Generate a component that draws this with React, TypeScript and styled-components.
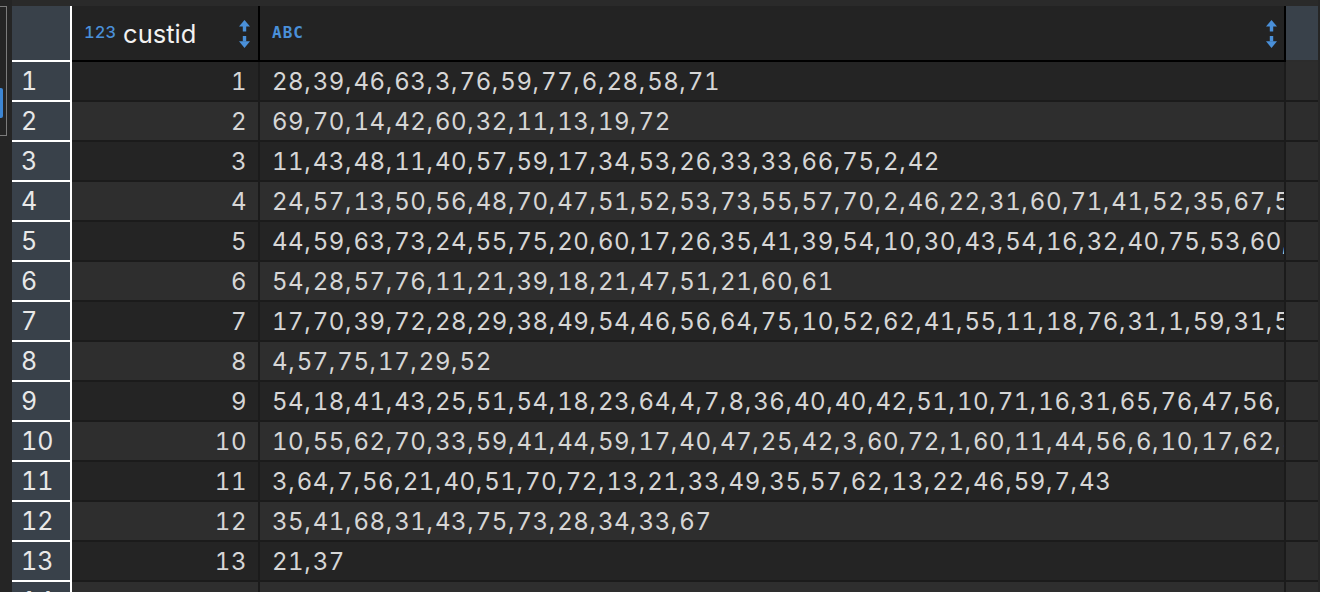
import React from 'react';
import styled, { createGlobalStyle } from 'styled-components';

const GlobalStyle = createGlobalStyle`
  html, body {
    margin: 0;
    padding: 0;
    background: #262626;
  }
  body {
    font-family: Inter, "Liberation Sans", Arial, sans-serif;
    font-variant-numeric: tabular-nums;
    overflow: hidden;
  }
`;

const Page = styled.div`
  display: flex;
  width: 1320px;
  height: 592px;
  overflow: hidden;
  background: #262626;
`;

const Gutter = styled.div`
  width: 12px;
  flex: none;
  background: #252525;
`;

const GutterFrame = styled.div`
  box-sizing: border-box;
  margin-top: 6px;
  width: 7px;
  height: 130px;
  border: 1px solid #7c7c7c;
  border-left: none;
  display: flex;
  flex-direction: column;
  padding-top: 81px;
`;

const GutterMarker = styled.div`
  width: 3px;
  height: 30px;
  background: #3d86d4;
  border-radius: 0 2px 2px 0;
`;

const Grid = styled.div`
  width: 1306px;
  flex: none;
  display: flex;
  flex-direction: column;
  padding-top: 6px;
  background: #2a2a2a;
`;

const EdgeStrip = styled.div`
  flex: 1;
  background: #262626;
`;

const HeaderRow = styled.div`
  display: flex;
  height: 56px;
  flex: none;
`;

const CornerCell = styled.div`
  box-sizing: border-box;
  width: 60px;
  background: #39414a;
  border-right: 2px solid #ffffff;
  border-bottom: 2px solid #ffffff;
`;

const HeaderCell = styled.div<{ $width: number; $padRight: number }>`
  box-sizing: border-box;
  width: ${(p) => p.$width}px;
  display: flex;
  align-items: center;
  justify-content: space-between;
  padding: 0 ${(p) => p.$padRight}px 0 12px;
  background: #232323;
  border-right: 2px solid #000000;
  border-bottom: 2px solid #000000;
`;

const HeaderTitle = styled.div`
  display: flex;
  align-items: center;
  gap: 7px;
`;

const TypeTag = styled.span`
  font-size: 16.5px;
  font-weight: 500;
  color: #4a90d9;
  margin-bottom: 2px;
`;

const ColumnName = styled.span`
  font-size: 25.5px;
  color: #f2f2f2;
`;

const AbcTag = styled.span`
  font-family: "DejaVu Sans Mono", monospace;
  font-weight: 700;
  font-size: 16px;
  letter-spacing: 1px;
  color: #4a90d9;
  margin-bottom: 1px;
`;

const SortSvg = styled.svg`
  flex: none;
  width: 11px;
  height: 28px;
  margin-top: 2px;
`;

const HeaderRight = styled.div`
  box-sizing: border-box;
  width: 32px;
  background: #39414a;
  border-bottom: 2px solid #2c2c2c;
`;

const BodyRow = styled.div<{ $odd: boolean }>`
  display: flex;
  height: 40px;
  flex: none;
  background: ${(p) => (p.$odd ? '#242424' : '#2e2e2e')};
`;

const RowNumber = styled.div`
  box-sizing: border-box;
  width: 60px;
  display: flex;
  align-items: center;
  padding-left: 9px;
  background: #39414a;
  border-right: 2px solid #ffffff;
  border-bottom: 2px solid #ffffff;
  font-size: 25px;
  color: #e8e8e8;
`;

const Cell = styled.div<{ $width: number; $align: 'left' | 'right' }>`
  box-sizing: border-box;
  width: ${(p) => p.$width}px;
  display: flex;
  align-items: center;
  justify-content: ${(p) => (p.$align === 'right' ? 'flex-end' : 'flex-start')};
  padding: ${(p) => (p.$align === 'right' ? '0 11px 0 0' : '0 0 0 12px')};
  border-right: 2px solid #1b1b1b;
  border-bottom: 2px solid #1b1b1b;
  overflow: hidden;
  white-space: nowrap;
  font-size: 24px;
  letter-spacing: 0.55px;
  color: #d6d6d6;
`;

const Comma = styled.span`
  margin-right: 1.5px;
`;

const RightCell = styled.div`
  box-sizing: border-box;
  width: 32px;
  background: #2d2d2d;
  border-bottom: 2px solid #1b1b1b;
`;

const SortIcon = () => (
  <SortSvg viewBox="0 0 11 28">
    <polygon points="0,6.5 5.5,0 11,6.5" fill="#4a90d9" />
    <rect x="3.8" y="6" width="3.4" height="5.5" fill="#4a90d9" />
    <rect x="3.8" y="16" width="3.4" height="5.5" fill="#4a90d9" />
    <polygon points="0,21.3 11,21.3 5.5,28" fill="#4a90d9" />
  </SortSvg>
);

const rows: string[] = [
  '28,39,46,63,3,76,59,77,6,28,58,71',
  '69,70,14,42,60,32,11,13,19,72',
  '11,43,48,11,40,57,59,17,34,53,26,33,33,66,75,2,42',
  '24,57,13,50,56,48,70,47,51,52,53,73,55,57,70,2,46,22,31,60,71,41,52,35,67,54,12,30,44',
  '44,59,63,73,24,55,75,20,60,17,26,35,41,39,54,10,30,43,54,16,32,40,75,53,60,31,8,19',
  '54,28,57,76,11,21,39,18,21,47,51,21,60,61',
  '17,70,39,72,28,29,38,49,54,46,56,64,75,10,52,62,41,55,11,18,76,31,1,59,31,50,22,14',
  '4,57,75,17,29,52',
  '54,18,41,43,25,51,54,18,23,64,4,7,8,36,40,40,42,51,10,71,16,31,65,76,47,56,23,61',
  '10,55,62,70,33,59,41,44,59,17,40,47,25,42,3,60,72,1,60,11,44,56,6,10,17,62,38,27',
  '3,64,7,56,21,40,51,70,72,13,21,33,49,35,57,62,13,22,46,59,7,43',
  '35,41,68,31,43,75,73,28,34,33,67',
  '21,37',
  '24,55,74,1,34,71,46,53,30,34,51,16,40,20,36,27,53,32,58,32,6,32',
];

const renderList = (text: string) => {
  const parts = text.split(',');
  return parts.map((part, i) => (
    <React.Fragment key={i}>
      {part}
      {i < parts.length - 1 && <Comma>,</Comma>}
    </React.Fragment>
  ));
};

export default function App() {
  return (
    <>
      <GlobalStyle />
      <Page>
        <Gutter>
          <GutterFrame>
            <GutterMarker />
          </GutterFrame>
        </Gutter>
        <Grid>
          <HeaderRow>
            <CornerCell />
            <HeaderCell $width={188} $padRight={8}>
              <HeaderTitle>
                <TypeTag>123</TypeTag>
                <ColumnName>custid</ColumnName>
              </HeaderTitle>
              <SortIcon />
            </HeaderCell>
            <HeaderCell $width={1026} $padRight={7}>
              <HeaderTitle>
                <AbcTag>ABC</AbcTag>
              </HeaderTitle>
              <SortIcon />
            </HeaderCell>
            <HeaderRight />
          </HeaderRow>
          {rows.map((list, i) => (
            <BodyRow key={i} $odd={i % 2 === 0}>
              <RowNumber>{i + 1}</RowNumber>
              <Cell $width={188} $align="right">
                {i + 1}
              </Cell>
              <Cell $width={1026} $align="left">
                {renderList(list)}
              </Cell>
              <RightCell />
            </BodyRow>
          ))}
        </Grid>
        <EdgeStrip />
      </Page>
    </>
  );
}
